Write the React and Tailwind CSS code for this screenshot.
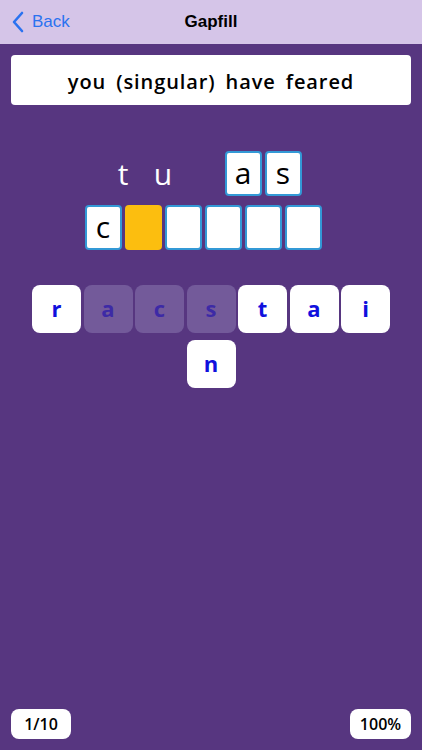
import React from "react";

const font = { fontFamily: "'Open Sans', 'Noto Sans', sans-serif" };

function Cell({ ch, kind }) {
  // kind: "text" = plain letter, "box" = bordered white box, "blank" = empty gap, "active" = yellow
  if (kind === "text") {
    return (
      <div className="w-[37px] h-[45px] flex items-center justify-center text-white text-[30px] leading-none">
        {ch}
      </div>
    );
  }
  if (kind === "blank") return <div className="w-[37px] h-[45px]" />;
  if (kind === "active") {
    return <div className="w-[37px] h-[45px] rounded-[4px] bg-[#fcbe0f]" />;
  }
  return (
    <div className="w-[37px] h-[45px] rounded-[4px] bg-white border-2 border-[#3399d6] flex items-center justify-center text-black text-[30px] leading-none pb-[2px]">
      {ch}
    </div>
  );
}

function Tile({ ch, used }) {
  return (
    <div
      className={`w-[49px] h-[48px] rounded-[8px] flex items-center justify-center text-[22px] font-bold ${
        used ? "bg-[#735a9a] text-[#3d2aa6]" : "bg-white text-[#1010dd]"
      }`}
    >
      <span className="pb-[2px]">{ch}</span>
    </div>
  );
}

export default function App() {
  const row1 = [
    { ch: "t", kind: "text" },
    { ch: "u", kind: "text" },
    { ch: "", kind: "blank" },
    { ch: "a", kind: "box" },
    { ch: "s", kind: "box" },
  ];
  const row2 = [
    { ch: "c", kind: "box" },
    { ch: "", kind: "active" },
    { ch: "", kind: "box" },
    { ch: "", kind: "box" },
    { ch: "", kind: "box" },
    { ch: "", kind: "box" },
  ];
  const tiles = [
    { ch: "r", used: false },
    { ch: "a", used: true },
    { ch: "c", used: true },
    { ch: "s", used: true },
    { ch: "t", used: false },
    { ch: "a", used: false },
    { ch: "i", used: false },
    { ch: "n", used: false },
  ];

  return (
    <div className="w-[422px] h-[750px] bg-[#573680] flex flex-col" style={font}>
      {/* Nav bar */}
      <div className="h-[44px] bg-[#d5c5e8] flex items-center relative shrink-0">
        <div className="flex items-center pl-[12px] gap-[8px] text-[#2a72f0]">
          <svg width="12" height="22" viewBox="0 0 12 22" fill="none">
            <path d="M10 2 L2 11 L10 20" stroke="#2a72f0" strokeWidth="2.6" strokeLinecap="round" strokeLinejoin="round" />
          </svg>
          <span className="text-[17px]" style={{ fontFamily: "'Liberation Sans', sans-serif" }}>Back</span>
        </div>
        <div
          className="absolute inset-x-0 text-center text-[17px] font-bold text-black pointer-events-none"
          style={{ fontFamily: "'Liberation Sans', sans-serif" }}
        >
          Gapfill
        </div>
      </div>

      {/* Prompt card */}
      <div className="mx-[11px] mt-[11px] h-[50px] bg-white rounded-[4px] flex items-center justify-center">
        <span className="text-[20px] font-semibold text-black tracking-[0.9px] [word-spacing:4px] pt-[3px]">
          you (singular) have feared
        </span>
      </div>

      {/* Answer grid */}
      <div className="mt-[46px] flex flex-col items-center pr-[16px] gap-[9px]">
        <div className="flex gap-[3px]">
          {row1.map((c, i) => (
            <Cell key={i} {...c} />
          ))}
        </div>
        <div className="flex gap-[3px]">
          {row2.map((c, i) => (
            <Cell key={i} {...c} />
          ))}
        </div>
      </div>

      {/* Letter tiles */}
      <div className="mt-[35px] mx-auto w-[360px] flex flex-wrap justify-center gap-x-[2.5px] gap-y-[7px]">
        {tiles.map((t, i) => (
          <Tile key={i} {...t} />
        ))}
      </div>

      {/* Footer */}
      <div className="mt-auto mb-[11px] px-[11px] flex justify-between">
        <div className="w-[60px] h-[30px] bg-white rounded-[8px] flex items-center justify-center text-[16px] font-semibold text-black">
          1/10
        </div>
        <div className="w-[61px] h-[30px] bg-white rounded-[8px] flex items-center justify-center text-[16px] font-semibold text-black">
          100%
        </div>
      </div>
    </div>
  );
}
